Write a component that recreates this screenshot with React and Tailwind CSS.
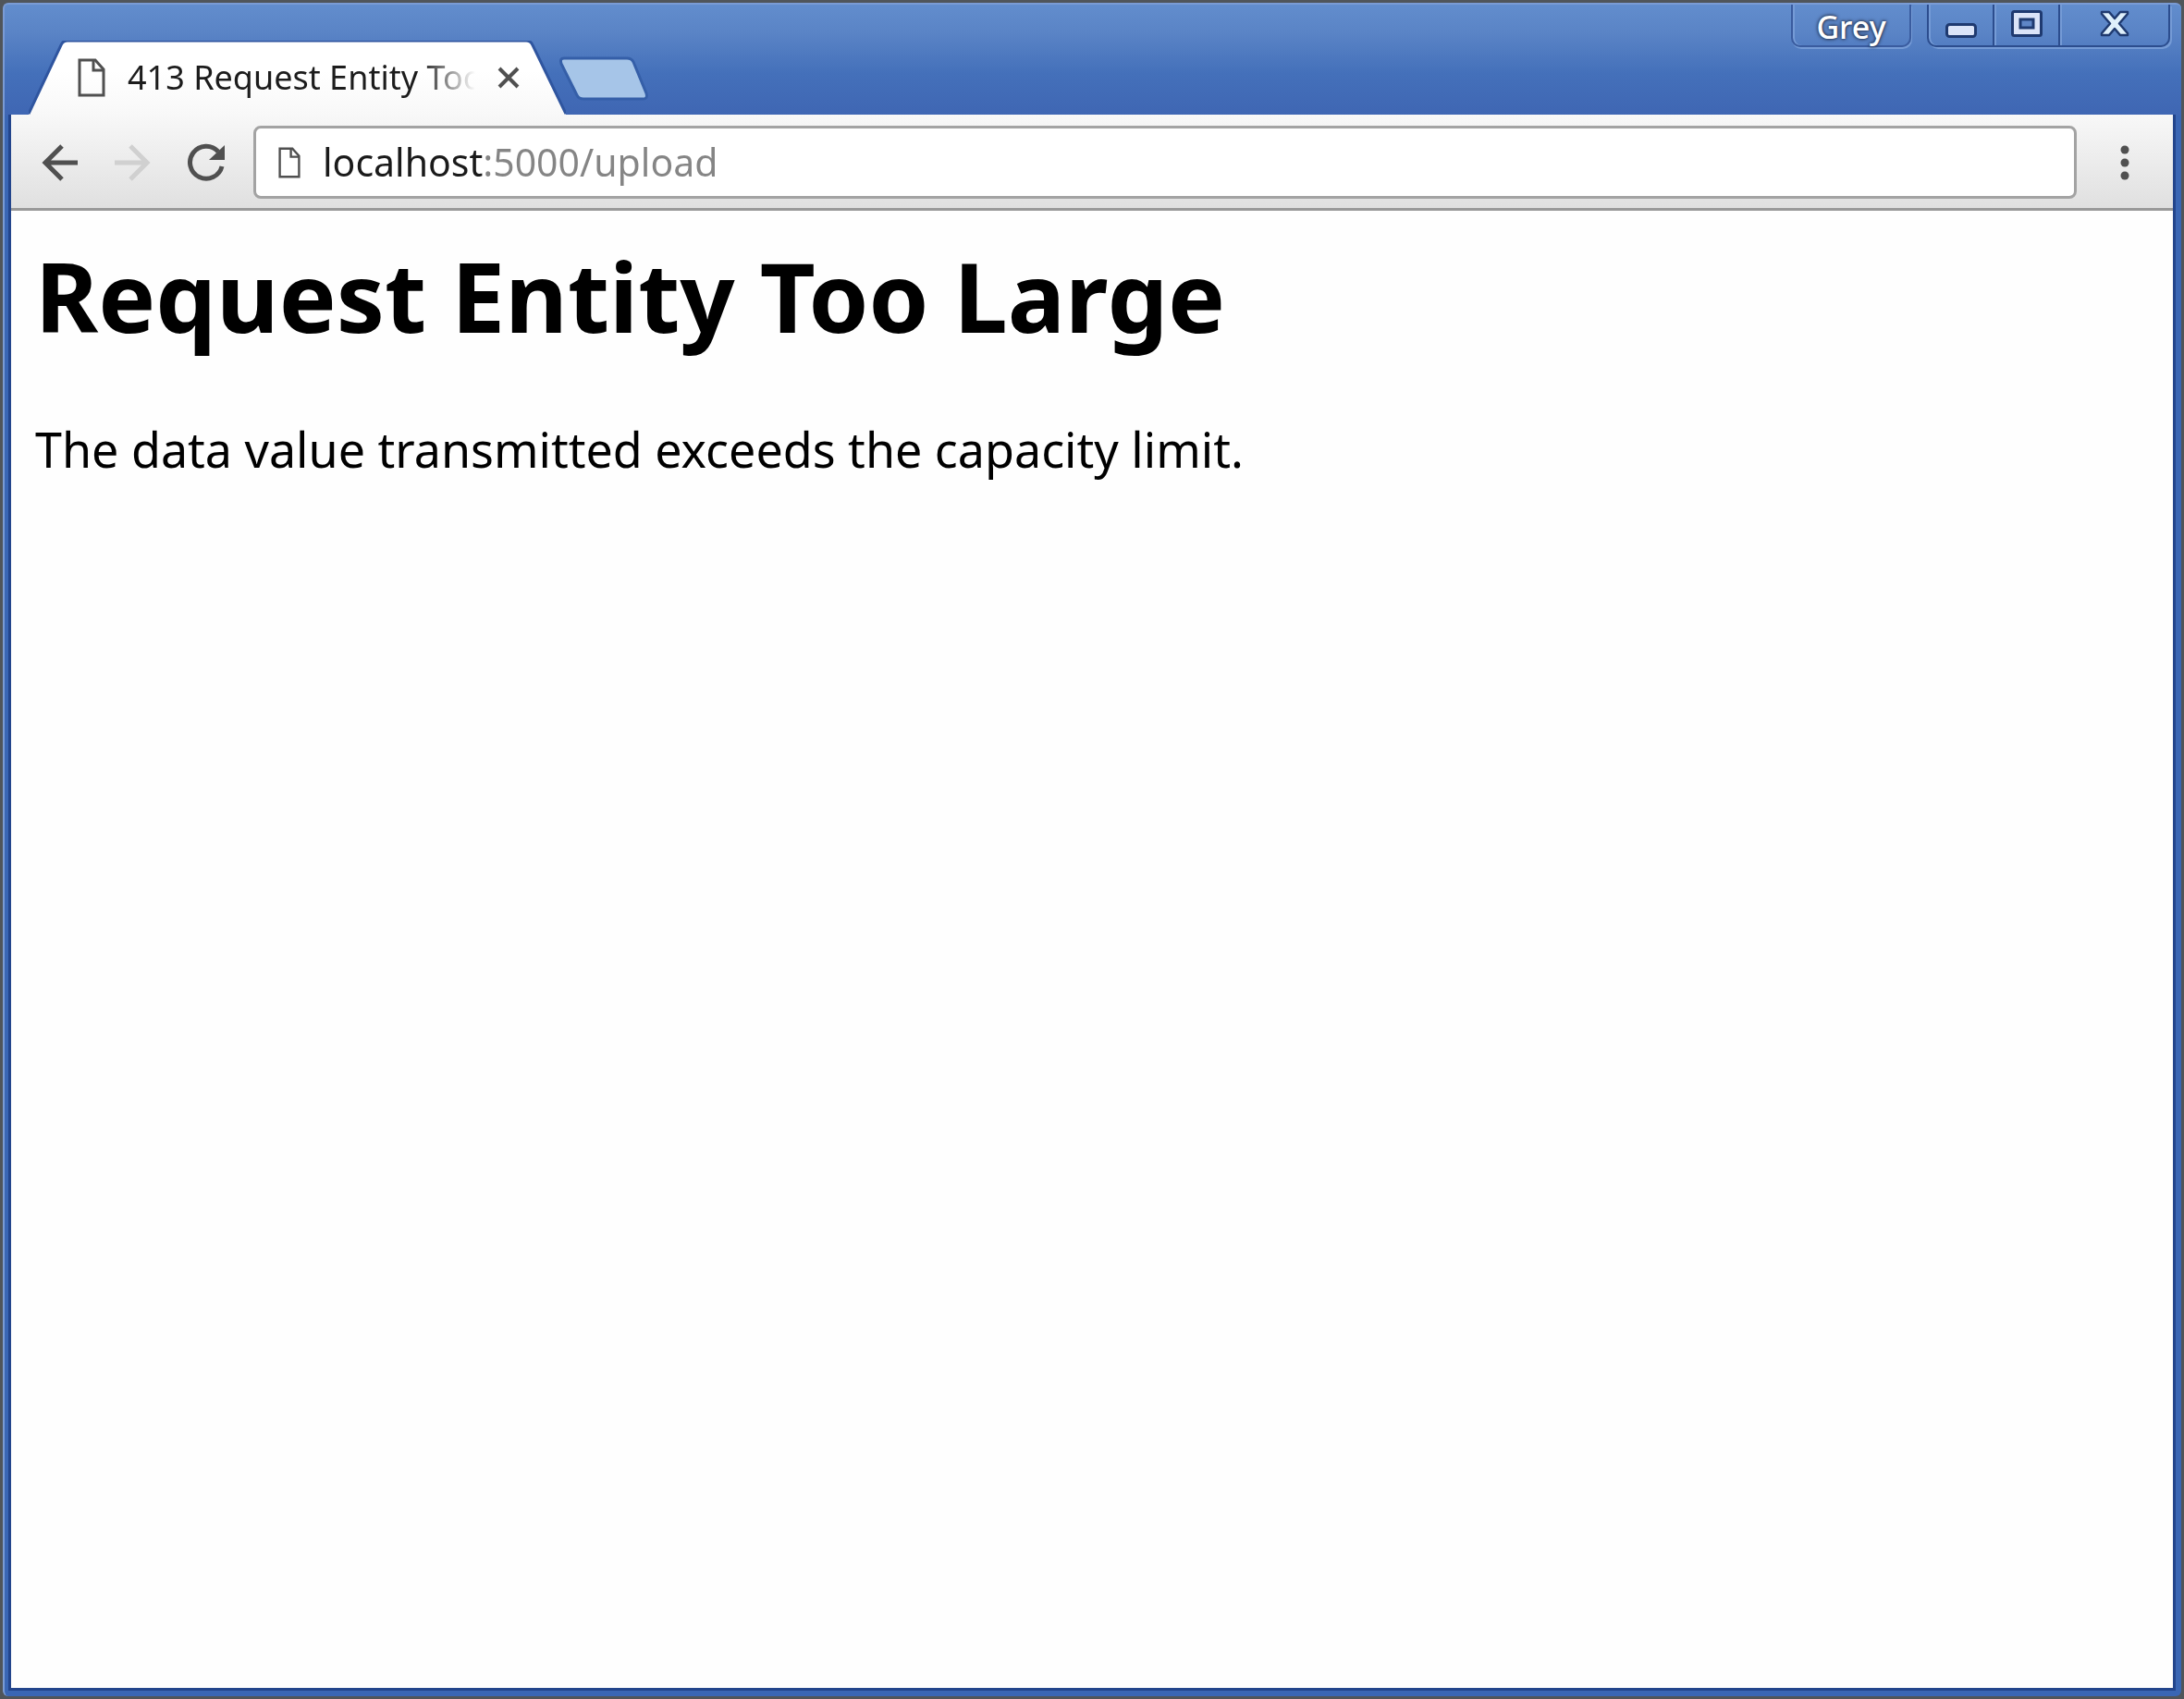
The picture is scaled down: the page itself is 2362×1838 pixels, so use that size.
import React from "react";

function PageIcon({ className }) {
  return (
    <svg viewBox="0 0 30 42" className={className} fill="none" stroke="#505050" strokeWidth="3" aria-hidden="true">
      <path d="M2 2h17l9 10v28H2z" />
      <path d="M17 2v11h11" />
    </svg>
  );
}

function Tab() {
  return (
    <div className="relative flex h-20 w-[581px] items-center pr-[50px] pl-[53px]">
      <svg
        viewBox="0 0 582 80"
        preserveAspectRatio="none"
        className="absolute inset-0 h-full w-full"
        aria-hidden="true"
      >
        <defs>
          <linearGradient id="tabFill" x1="0" y1="0" x2="0" y2="1">
            <stop offset="0.4" stopColor="#ffffff" />
            <stop offset="1" stopColor="#f8f8f8" />
          </linearGradient>
        </defs>
        <path d="M0 80L35 6Q37 1 42 1H539Q544 1 546 6L582 80z" fill="url(#tabFill)" />
        <path d="M0 79L35 5Q37 0 42 0H539Q544 0 546 5L582 79" fill="none" stroke="#2f559f" strokeWidth="3" />
      </svg>
      <PageIcon className="relative h-[42px] w-[30px] shrink-0" />
      <span className="relative ml-6 w-[376px] overflow-hidden bg-[linear-gradient(90deg,#1c1c1c_84%,transparent)] bg-clip-text text-[36px] leading-[48px] whitespace-nowrap text-transparent">
        413 Request Entity Too Large
      </span>
      <button aria-label="Close tab" className="relative ml-auto">
        <svg viewBox="0 0 24 24" className="size-6" fill="none" stroke="#505050" strokeWidth="4" aria-hidden="true">
          <path d="M2 2l20 20M22 2L2 22" />
        </svg>
      </button>
    </div>
  );
}

function WindowControls() {
  return (
    <div className="mr-3 flex items-start gap-[17px]">
      <button className="h-[46px] w-[130px] rounded-b-[10px] border-2 border-t-0 border-[#3a5c9f] text-[34px] leading-[48px] font-medium text-white shadow-[1px_2px_0_#759bd6,inset_2px_0_0_#759bd6] [text-shadow:0_0_4px_#25304a,0_0_3px_#25304a]">
        Grey
      </button>
      <div className="flex h-[46px] rounded-b-[10px] border-2 border-t-0 border-[#2c4d8e] shadow-[2px_2px_0_#759bd6,inset_2px_0_0_#759bd6]">
        <button aria-label="Minimize" className="flex w-[71px] justify-center border-r-2 border-[#2c4d8e] pt-5">
          <svg viewBox="0 0 34 16" className="h-4 w-[34px]" aria-hidden="true">
            <rect x="1.5" y="1.5" width="31" height="13" rx="3" fill="#dbe4f8" stroke="#1f3a70" strokeWidth="3" />
          </svg>
        </button>
        <button
          aria-label="Maximize"
          className="flex w-[71px] justify-center border-r-2 border-[#2c4d8e] pt-1.5 shadow-[inset_2px_0_0_#759bd6]"
        >
          <svg viewBox="0 0 34 29" className="h-[29px] w-[34px]" aria-hidden="true">
            <rect x="1.5" y="1.5" width="31" height="26" rx="2" fill="#dbe4f8" stroke="#1f3a70" strokeWidth="3" />
            <rect x="10" y="10" width="14" height="9" fill="#5f86c6" stroke="#1f3a70" strokeWidth="3" />
          </svg>
        </button>
        <button aria-label="Close" className="flex w-[117px] justify-center pt-1.5 shadow-[inset_2px_0_0_#759bd6]">
          <svg viewBox="0 0 32 29" className="h-[29px] w-8" aria-hidden="true">
            <path
              d="M2 2h8l6 7 6-7h8v2l-9 10.500 9 10.500v2h-8l-6-7-6 7H2v-2l9-10.500L2 4z"
              fill="#dff0fb"
              stroke="#1f3a70"
              strokeWidth="2.5"
              strokeLinejoin="round"
            />
          </svg>
        </button>
      </div>
    </div>
  );
}

function Toolbar() {
  return (
    <nav className="flex h-[104px] shrink-0 items-center border-b-3 border-[#999] bg-linear-to-b from-[#f8f8f8] to-[#e0e0e0] pt-[2px] pr-[47px] pl-8">
      <button aria-label="Back">
        <svg viewBox="0 0 40 40" className="size-10" fill="none" stroke="#505050" strokeWidth="5" aria-hidden="true">
          <path d="M40 20H4M23 2L5 20l18 18" />
        </svg>
      </button>
      <button aria-label="Forward" disabled className="ml-10">
        <svg viewBox="0 0 40 40" className="size-10" fill="none" stroke="#d0d0d0" strokeWidth="5" aria-hidden="true">
          <path d="M0 20h36M17 2l18 18-18 18" />
        </svg>
      </button>
      <button aria-label="Reload" className="ml-[38px]">
        <svg viewBox="0 0 42 42" className="size-[42px]" aria-hidden="true">
          <path d="M38 25A17.500 17.500 0 1 1 34 9" fill="none" stroke="#505050" strokeWidth="5" />
          <path d="M41 2v16H24z" fill="#505050" />
        </svg>
      </button>
      <label className="ml-[30px] flex h-[79px] min-w-0 flex-1 items-center rounded-lg border-3 border-[#a3a3a3] bg-white pl-6">
        <PageIcon className="h-9 w-6 shrink-0" />
        <input
          type="text"
          aria-label="Address"
          defaultValue="localhost:5000/upload"
          className="ml-6 h-14 min-w-0 flex-1 bg-[linear-gradient(90deg,#1a1a1a_174px,#858585_174px)] bg-clip-text text-[41px] text-transparent outline-none"
        />
      </label>
      <button aria-label="Menu" className="ml-[47px]">
        <svg viewBox="0 0 10 38" className="h-[38px] w-2.5" fill="#505050" aria-hidden="true">
          <circle cx="5" cy="5" r="4.500" />
          <circle cx="5" cy="19" r="4.500" />
          <circle cx="5" cy="33" r="4.500" />
        </svg>
      </button>
    </nav>
  );
}

export default function App() {
  return (
    <div className="flex min-h-screen flex-col bg-[#50555a] p-[3px] font-['Noto_Sans','Open_Sans',sans-serif]">
      <div className="flex flex-1 flex-col rounded-md border-t-2 border-l-2 border-[#7a9bd4] bg-[#3a66b4] bg-[linear-gradient(180deg,#628dcd_0px,#5a84c6_30px,#4470ba_75px,#3f66b3_120px)] bg-[length:100%_120px] bg-no-repeat">
        <header className="flex h-[119px] shrink-0 items-end justify-between">
          <div className="flex items-end pl-[26px]">
            <Tab />
            <button aria-label="New tab" className="-ml-2 mb-[15px]">
              <svg viewBox="0 0 98 48" className="h-12 w-[98px]" aria-hidden="true">
                <path
                  d="M6 2H74Q79 2 81 6L95 40Q97 46 91 46H27Q22 46 20 42L3 8Q1 2 6 2z"
                  fill="#a6c5e8"
                  stroke="#355fa8"
                  strokeWidth="3"
                />
              </svg>
            </button>
          </div>
          <div className="self-start">
            <WindowControls />
          </div>
        </header>
        <div className="mr-1.5 mb-1.5 ml-1 flex flex-1 flex-col border-3 border-t-0 border-[#23458c] bg-[#fefefe]">
          <Toolbar />
          <main className="px-[26px] pt-5 text-black">
            <h1 className="text-[104px] leading-[144px] font-bold">Request Entity Too Large</h1>
            <p className="mt-[58px] text-[52px] leading-[72px]">
              The data value transmitted exceeds the capacity limit.
            </p>
          </main>
        </div>
      </div>
    </div>
  );
}
